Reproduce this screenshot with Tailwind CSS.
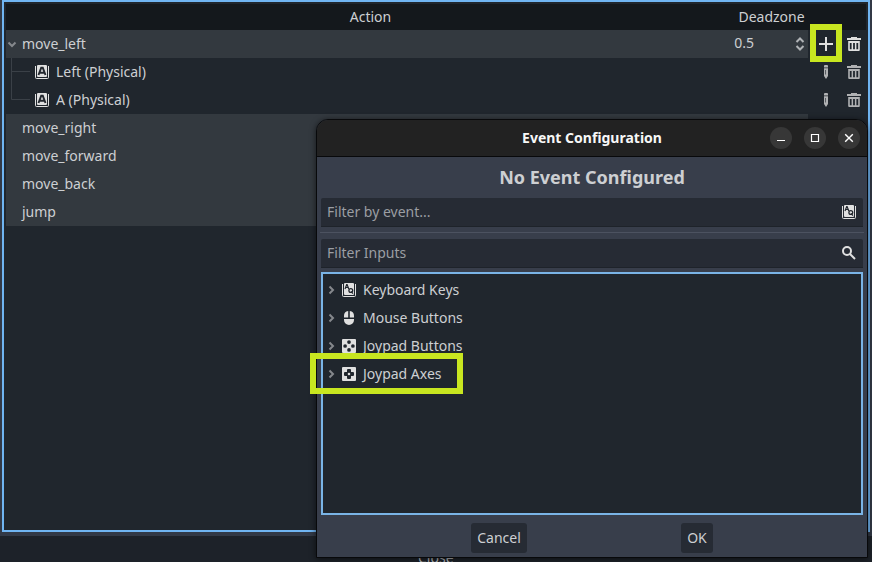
<!DOCTYPE html>
<html lang="en">
<head>
<meta charset="utf-8">
<title>Input Map</title>
<script src="https://cdn.jsdelivr.net/npm/@tailwindcss/browser@4"></script>
</head>
<body class="relative w-[872px] h-[562px] overflow-hidden bg-[#1d2229] font-['Noto_Sans',sans-serif] text-[14px] leading-[28px] text-[#cdcfd2]">
<svg class="hidden">
  <symbol id="key" viewBox="0 0 16 16"><path fill="none" stroke="#e0e0e0" d="M1.500 2v11.500a1 1 0 0 0 1 1h11a1 1 0 0 0 1-1V2"/><rect x="3" y="1" width="10" height="12" rx="1" fill="#e0e0e0"/><path fill="none" stroke="#22272e" stroke-width="1.9" d="M4.500 11 7.200 3.800h1.600L11.500 11M5.800 8.700h4.400"/></symbol>
  <symbol id="keys" viewBox="0 0 16 16"><path fill="none" stroke="#e0e0e0" d="M1.500 2v11.500a1 1 0 0 0 1 1h11a1 1 0 0 0 1-1V2"/><rect x="3" y="1" width="10" height="12" rx="1" fill="#e0e0e0"/><path fill="none" stroke="#22272e" stroke-width="1.2" d="M4 7 5.700 2.600h.4L7.800 7M4.800 5.500H7"/><circle cx="9.800" cy="8.500" r="1.900" fill="none" stroke="#22272e" stroke-width="1.300"/><path stroke="#22272e" stroke-width="1.2" d="m10 9.500 2 2.200"/></symbol>
  <symbol id="trash" viewBox="0 0 16 16"><path fill="#e0e0e0" fill-rule="evenodd" d="M5 1v1H1v2h14V2h-4V1zM2.200 5v9a1 1 0 0 0 1 1h9.600a1 1 0 0 0 1-1V5zm1.600 2h1.800v6.200H3.800zm3.300 0h1.800v6.200H7.100zm3.300 0h1.800v6.200h-1.800z"/></symbol>
  <symbol id="pencil" viewBox="0 0 16 16"><path fill="#e0e0e0" fill-rule="evenodd" d="M7 1a1 1 0 0 0-1 1v1.500h4V2a1 1 0 0 0-1-1zM6 4.300V12l2 3 2-3V4.300zm1.200 1.700h.6v4.500h-.6z"/></symbol>
  <symbol id="chev" viewBox="0 0 12 12"><path fill="none" stroke="#85888c" stroke-width="2" d="M4.500 2.500 8 6 4.500 9.500"/></symbol>
</svg>

<div class="absolute inset-x-0 top-0 h-[536px] bg-[#323946] pl-[2px] pr-[2px] pb-[4px]">
  <main class="h-[532px] border-2 border-[#70b5f2] bg-[#20262d] px-[2px] pt-[2px]">
    <header class="flex h-[26px] leading-[26px] bg-[#14181c] text-center">
      <div class="w-[729px]">Action</div><div class="w-[73px]">Deadzone</div>
    </header>
    <div class="flex h-[28px] items-center">
      <div class="flex w-[802px] h-[28px] items-center bg-[#33393f]">
        <svg class="w-3 h-3 rotate-90"><use href="#chev"/></svg>
        <span class="ml-[4px] grow">move_left</span>
        <span class="relative -top-px">0.5</span>
        <svg class="ml-[38px] mr-0 w-4 h-4" viewBox="0 0 16 16"><path fill="none" stroke="#b0b3b6" stroke-width="2" d="m4.500 6 3.500-3.500 3.500 3.500M4.500 10l3.500 3.500 3.500-3.500"/></svg>
      </div>
      <svg class="ml-[10px] w-4 h-4" viewBox="0 0 16 16"><path stroke="#e0e0e0" stroke-width="2" d="M8 1v14M1 8h14"/></svg>
      <svg class="ml-[12px] w-4 h-4"><use href="#trash"/></svg>
    </div>
    <div class="flex">
      <svg class="w-[28px] h-[56px]" viewBox="0 0 28 56"><path fill="none" stroke="#3a4047" d="M5.500 0v41.500H24M5.500 13.500H24"/></svg>
      <div class="grow">
        <div class="flex h-[28px] items-center"><svg class="w-4 h-4"><use href="#key"/></svg><span class="ml-[6px] grow">Left (Physical)</span><svg class="w-4 h-4 opacity-75"><use href="#pencil"/></svg><svg class="ml-[12px] mr-[4px] w-4 h-4 opacity-75"><use href="#trash"/></svg></div>
        <div class="flex h-[28px] items-center"><svg class="w-4 h-4"><use href="#key"/></svg><span class="ml-[6px] grow">A (Physical)</span><svg class="w-4 h-4 opacity-75"><use href="#pencil"/></svg><svg class="ml-[12px] mr-[4px] w-4 h-4 opacity-75"><use href="#trash"/></svg></div>
      </div>
    </div>
    <div class="w-[802px] bg-[#33393f] pl-[16px]">
      <div>move_right</div><div>move_forward</div><div>move_back</div><div>jump</div>
    </div>
  </main>
</div>
<div class="absolute left-[418px] top-[544px] text-[#b4b6b9]">Close</div>

<section class="absolute left-[316px] top-[119px] w-[552px] h-[439px] overflow-hidden rounded-t-[12px] border border-[#08090b] bg-[#383e4b] shadow-[0_1px_6px_rgba(0,0,0,0.6)]">
  <div class="relative flex h-[37px] items-center justify-end gap-[12px] border-b border-[#08090b] bg-[#222222] pr-[7px]">
    <h1 class="absolute inset-x-0 text-center font-bold text-[14px] text-[#f7f7f7]">Event Configuration</h1>
    <svg class="w-[22px] h-[22px]" viewBox="0 0 22 22"><circle cx="11" cy="11" r="11" fill="#373737"/><path stroke="#fff" stroke-width="1.200" d="M7 13.500h8"/></svg>
    <svg class="w-[22px] h-[22px]" viewBox="0 0 22 22"><circle cx="11" cy="11" r="11" fill="#373737"/><path fill="none" stroke="#fff" stroke-width="1.200" d="M7.500 7.500h7v7h-7z"/></svg>
    <svg class="w-[22px] h-[22px]" viewBox="0 0 22 22"><circle cx="11" cy="11" r="11" fill="#373737"/><path stroke="#fff" stroke-width="1.400" d="m7.200 7.200 7.600 7.600m0-7.600-7.600 7.600"/></svg>
  </div>
  <div class="px-[4px]">
    <h2 class="h-[41px] leading-[41px] text-center text-[18px] font-bold">No Event Configured</h2>
    <div class="flex h-[29px] items-center rounded-t-[2px] border-b border-[#1e232a] bg-[#262b34] pl-[6px] pr-[6px] text-[#9b9ea3]"><span class="grow">Filter by event...</span><svg class="w-4 h-4"><use href="#keys"/></svg></div>
    <div class="mt-[5px] mb-[6px] -mx-px h-px bg-[#4c5260]"></div>
    <div class="flex h-[29px] items-center rounded-t-[2px] border-b border-[#1e232a] bg-[#262b34] pl-[6px] pr-[6px] text-[#9b9ea3]"><span class="grow">Filter Inputs</span><svg class="w-4 h-4" viewBox="0 0 16 16"><g fill="none" stroke="#e0e0e0" stroke-width="2"><circle cx="6" cy="6" r="4"/><path d="m9 9 5 5"/></g></svg></div>
    <div class="mt-[4px] h-[243px] border-2 border-[#7ab4e6] bg-[#20262d] pt-[2px] pl-[2px]">
      <div class="flex h-[28px] items-center"><svg class="w-3 h-3"><use href="#chev"/></svg><svg class="ml-[4px] w-4 h-4"><use href="#keys"/></svg><span class="ml-[6px]">Keyboard Keys</span></div>
      <div class="flex h-[28px] items-center"><svg class="w-3 h-3"><use href="#chev"/></svg><svg class="ml-[4px] w-4 h-4" viewBox="0 0 16 16"><path fill="#e0e0e0" d="M7.200 1A5 5 0 0 0 3 6v1.500h4.200zm1.600 0v6.500H13V6a5 5 0 0 0-4.200-5zM3 9v1a5 5 0 0 0 10 0V9z"/></svg><span class="ml-[6px]">Mouse Buttons</span></div>
      <div class="flex h-[28px] items-center"><svg class="w-3 h-3"><use href="#chev"/></svg><svg class="ml-[4px] w-4 h-4" viewBox="0 0 16 16"><rect x="1" y="1" width="14" height="14" rx="1" fill="#e0e0e0"/><g fill="#20262d"><circle cx="8" cy="4.100" r="1.850"/><circle cx="8" cy="11.900" r="1.850"/><circle cx="4.100" cy="8" r="1.850"/><circle cx="11.900" cy="8" r="1.850"/></g></svg><span class="ml-[6px]">Joypad Buttons</span></div>
      <div class="flex h-[28px] items-center"><svg class="w-3 h-3"><use href="#chev"/></svg><svg class="ml-[4px] w-4 h-4" viewBox="0 0 16 16"><rect x="1" y="1" width="14" height="14" rx="1" fill="#e0e0e0"/><path fill="#20262d" fill-rule="evenodd" d="M7 3a1 1 0 0 0-1 1v2H4a1 1 0 0 0-1 1v2a1 1 0 0 0 1 1h2v2a1 1 0 0 0 1 1h2a1 1 0 0 0 1-1v-2h2a1 1 0 0 0 1-1V7a1 1 0 0 0-1-1h-2V4a1 1 0 0 0-1-1zm1 3.700a1.300 1.300 0 0 1 0 2.600 1.300 1.300 0 0 1 0-2.600z"/></svg><span class="ml-[6px]">Joypad Axes</span></div>
    </div>
    <div class="mt-[8px] flex gap-[154px] pl-[150px] leading-[30px]">
      <button class="h-[30px] w-[56px] rounded-[3px] bg-[#262b34]">Cancel</button>
      <button class="h-[30px] w-[32px] rounded-[3px] bg-[#262b34]">OK</button>
    </div>
  </div>
</section>

<div class="absolute left-[810px] top-[24px] w-[32px] h-[38px] border-6 border-[#c8e620]"></div>
<div class="absolute left-[310px] top-[353px] w-[153px] h-[41px] border-6 border-[#c8e620]"></div>
</body>
</html>
